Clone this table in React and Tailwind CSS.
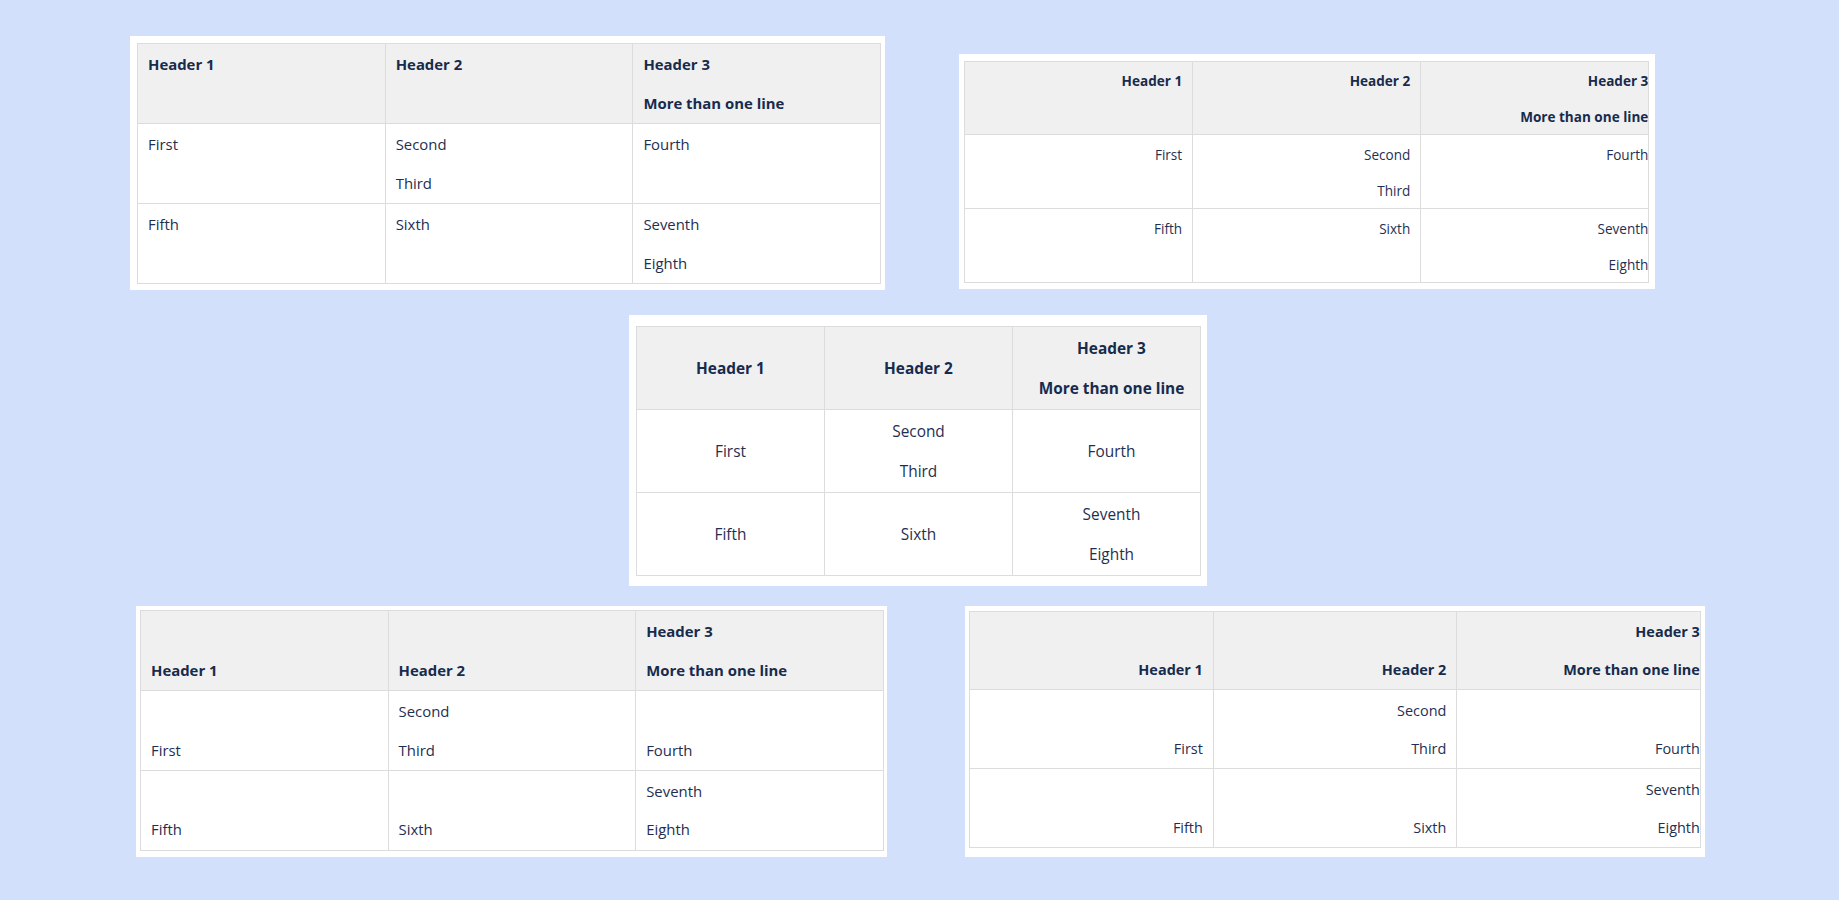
import React from 'react';

const header = [['Header 1'], ['Header 2'], ['Header 3', 'More than one line']];
const rows = [
    [['First'], ['Second', 'Third'], ['Fourth']],
    [['Fifth'], ['Sixth'], ['Seventh', 'Eighth']],
];

// each demo table spells out its own classes (sizes differ a little per table)
const tables = {
    topLeft: {
        frame: 'bg-white pt-[7px] pl-[7px] pr-[4px] pb-[6px]',
        grid: 'grid grid-cols-[repeat(3,247.7px)] border-l border-t border-[#dcdcdc] text-[14.9px] leading-[38.7px]',
        cell: 'h-[80px] flex flex-col justify-start pt-[1px] text-left pl-[10px] pr-[10px]',
        last: 'h-[80px] flex flex-col justify-start pt-[1px] text-left pl-[10px] pr-[10px]',
    },
    topRight: {
        frame: 'bg-white pt-[7px] pl-[5px] pr-[6px] pb-[6px]',
        grid: 'grid grid-cols-[repeat(3,228.1px)] border-l border-t border-[#dcdcdc] text-[13.55px] leading-[36px]',
        cell: 'h-[73.8px] flex flex-col justify-start pt-[1.5px] text-right pl-[10px] pr-[10px]',
        last: 'h-[73.8px] flex flex-col justify-start pt-[1.5px] text-right pl-[10px] pr-0',
    },
    middle: {
        frame: 'bg-white pt-[10.7px] pl-[7px] pr-[6px] pb-[10.3px]',
        grid: 'grid grid-cols-[repeat(3,188px)] border-l border-t border-[#dcdcdc] text-[15.4px] leading-[39.7px]',
        cell: 'h-[83px] flex flex-col justify-center pt-[2px] text-center px-[10px]',
        last: 'h-[83px] flex flex-col justify-center pt-[2px] text-center pl-[20px] pr-[10px]',
    },
    bottomLeft: {
        frame: 'bg-white pt-[4.3px] pl-[4.3px] pr-[3.3px] pb-[6px]',
        grid: 'grid grid-cols-[repeat(3,247.6px)] border-l border-t border-[#dcdcdc] text-[14.9px] leading-[38.7px]',
        cell: 'h-[79.8px] flex flex-col justify-end pb-[0.5px] text-left pl-[10px] pr-[10px]',
        last: 'h-[79.8px] flex flex-col justify-end pb-[0.5px] text-left pl-[10px] pr-[10px]',
    },
    bottomRight: {
        frame: 'bg-white pt-[4.7px] pl-[4.3px] pr-[4.3px] pb-[8.7px]',
        grid: 'grid grid-cols-[repeat(3,243.5px)] border-l border-t border-[#dcdcdc] text-[14.44px] leading-[38px]',
        cell: 'h-[78.8px] flex flex-col justify-end pb-[0.5px] text-right pl-[10px] pr-[10px]',
        last: 'h-[78.8px] flex flex-col justify-end pb-[0.5px] text-right pl-[10px] pr-0',
    },
};

const DemoTable = ({ cfg }) => (
    <div className={cfg.frame}>
        <div className={cfg.grid}>
            {header.map((lines, i) => (
                <div
                    key={`h${i}`}
                    className={`${i === 2 ? cfg.last : cfg.cell} bg-[#f0f0f0] border-r border-b border-[#dcdcdc] font-bold text-[#172b4d] whitespace-nowrap`}
                >
                    {lines.map((l) => <div key={l}>{l}</div>)}
                </div>
            ))}
            {rows.map((row, r) =>
                row.map((lines, i) => (
                    <div
                        key={`r${r}c${i}`}
                        className={`${i === 2 ? cfg.last : cfg.cell} bg-white border-r border-b border-[#dcdcdc] text-[#1f2f52] whitespace-nowrap`}
                    >
                        {lines.map((l) => <div key={l}>{l}</div>)}
                    </div>
                ))
            )}
        </div>
    </div>
);

export default function App() {
    return (
        <div className="min-h-screen w-full bg-[#d2e0fc] pt-[36px] font-['Open_Sans',sans-serif]">
            <div className="flex items-start pl-[130px] gap-[74px]">
                <DemoTable cfg={tables.topLeft} />
                <div className="mt-[17.7px]">
                    <DemoTable cfg={tables.topRight} />
                </div>
            </div>

            <div className="flex mt-[25px] pl-[629px]">
                <DemoTable cfg={tables.middle} />
            </div>

            <div className="flex items-start mt-[20px] pl-[135.7px] gap-[78px]">
                <DemoTable cfg={tables.bottomLeft} />
                <DemoTable cfg={tables.bottomRight} />
            </div>
        </div>
    );
}
